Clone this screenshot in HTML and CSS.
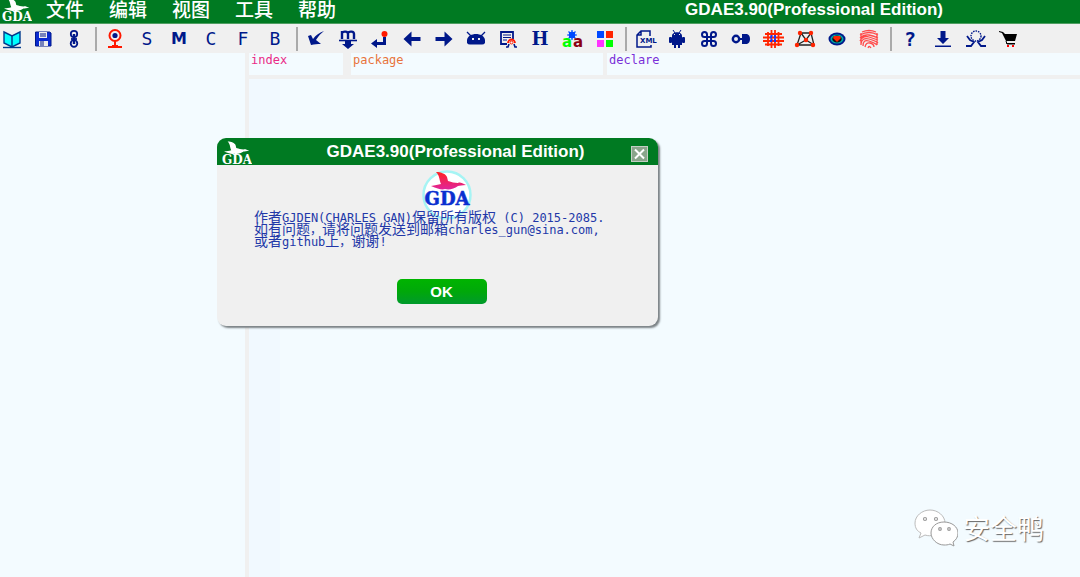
FILE: index.html
```html
<!DOCTYPE html>
<html lang="zh-CN">
<head>
<meta charset="utf-8">
<title>GDAE3.90(Professional Edition)</title>
<link rel="stylesheet" href="styles.css">
</head>
<body>
<svg class="defs" aria-hidden="true">
  <symbol id="bird" viewBox="0 0 36 18">
    <path d="M5 0c5 0 10 2 11 5l1 4c4 1 6 2 10 2 2-1 4 0 8 2-4 0-6 1-8 1-4 3-9 4-13 3-3 1-7 0-14-3 4-1 7-1 10-2-2-4-1-8-5-12z"/>
  </symbol>
</svg>
<header class="titlebar">
  <svg class="app-logo" viewBox="0 0 30 28" aria-label="GDA">
    <use href="#bird" x="2" y="3" width="26" height="14"/>
    <text x="15" y="26" text-anchor="middle">GDA</text>
  </svg>
  <nav class="menu">
    <button>文件</button><button>编辑</button><button>视图</button><button>工具</button><button>帮助</button>
  </nav>
  <h1 class="title">GDAE3.90(Professional Edition)</h1>
</header>

<div class="toolbar" role="toolbar" aria-label="Tools">
  <div class="group group-file">
    <button aria-label="Open"><svg viewBox="0 0 24 24"><path d="M4 5l8 4 8-4v11l-8 4-8-4z" fill="#0ff" stroke="#003a8c" stroke-width="1.4"/><path d="M12 9v10" stroke="#003a8c" stroke-width="1.4"/><path d="M3 20.500h18" stroke="#003a8c" stroke-width="1.400"/></svg></button>
    <button aria-label="Save"><svg viewBox="0 0 24 24"><path d="M4.500 5h14l1.500 1v13H4.500z" fill="#0b2bd0" stroke="#00188a"/><path d="M8 5h8v6H8zM8 14h9v5H8z" fill="#eee"/><path d="M9 7h6M9 9h6M10 14v5M12 14v5" stroke="#00188a"/></svg></button>
    <button aria-label="Link"><svg viewBox="0 0 24 24" fill="none" stroke="#00188a" stroke-width="1.800"><circle cx="12" cy="7" r="3.200"/><circle cx="12" cy="16.500" r="3.300"/><path d="M12 7v10" stroke-width="2.400"/><path d="M9 12h6"/></svg></button>
  </div>
  <span class="sep"></span>
  <div class="group">
    <button aria-label="Entry"><svg viewBox="0 0 24 24"><circle cx="12" cy="8.500" r="5.500" fill="#eee" stroke="#ff1800" stroke-width="2"/><circle cx="12" cy="8.500" r="2.600" fill="#00188a"/><path d="M12 14v5M5 20h14M9 19h6" stroke="#ff1800" stroke-width="2"/></svg></button>
    <button>S</button><button class="heavy">M</button><button>C</button><button>F</button><button>B</button>
  </div>
  <span class="sep"></span>
  <div class="group">
    <button aria-label="Check"><svg viewBox="0 0 24 24"><path d="M20 4c-5 4-6 6-8 9l5 4c-4 0-6 0-10 1L4 9l3-1 2 4c3-4 6-6 11-8z" fill="#00188a"/></svg></button>
    <button aria-label="Method"><svg viewBox="0 0 24 24" fill="none" stroke="#00188a"><path d="M6 12V4M6 6c1-2 6-2 6 1v5M12 6c1-2 6-2 6 1v5" stroke-width="2.400"/><path d="M3 13.500h18" stroke-width="1.600"/><path d="M9 14h6v3h3l-6 5-6-5h3z" fill="#00188a" stroke="none"/></svg></button>
    <button aria-label="Return"><svg viewBox="0 0 24 24"><path d="M18 10v8H9v3l-6-4.500L9 12v3h6v-5z" fill="#00188a"/><circle cx="16.500" cy="7" r="3" fill="#ff1800"/></svg></button>
    <button aria-label="Back"><svg viewBox="0 0 24 24"><path d="M3.500 12l8-7.500v5.500h9v4h-9v5.500z" fill="#00188a"/></svg></button>
    <button aria-label="Forward"><svg viewBox="0 0 24 24"><path d="M20.500 12l-8-7.500v5.500h-9v4h9v5.500z" fill="#00188a"/></svg></button>
    <button aria-label="App head"><svg viewBox="0 0 24 24"><path d="M3 16v-3c1-8 17-8 18 0v3q-1 1.500-3 1.500H6Q4 17.500 3 16z" fill="#00188a"/><path d="M3 5l4 4M21 5l-4 4" stroke="#00188a" stroke-width="1.300"/><path d="M8 11h2v2H8zM14 11h2v2h-2z" fill="#eee"/></svg></button>
    <button aria-label="Certificate"><svg viewBox="0 0 24 24" fill="none" stroke="#00188a"><path d="M11 17H5V5h12v7" stroke-width="1.800"/><path d="M7 8h8M7 10.500h8M7 13h4"/><path d="M12 16a3.500 3.500 0 1 1 7 0" stroke="#ff1800" stroke-width="1.800"/><circle cx="15.500" cy="15.500" r="1.500" stroke="#ff1800"/><path d="M13 17l-1 3h-2M18 17l1 3h2" stroke-width="1.600"/></svg></button>
    <button class="serif">H</button>
    <button class="replace" aria-label="Rename"><svg viewBox="0 0 24 24"><g stroke="#0048ff" fill="#0048ff"><circle cx="12" cy="8" r="3"/><path d="M12 3v10M7 8h10M8.500 4.500l7 7M15.500 4.500l-7 7" stroke-width="1.200"/></g><text x="2" y="20" fill="#0f0">a</text><text x="13" y="20" fill="#8a0010">a</text></svg></button>
    <button aria-label="Colours"><svg viewBox="0 0 24 24"><path d="M5 4h7v7H5z" fill="#0048ff"/><path d="M14 4h7v7h-7z" fill="#ff2400"/><path d="M5 13h7v7H5z" fill="#f3f"/><path d="M14 13h7v7h-7z" fill="#0f0"/></svg></button>
  </div>
  <span class="sep"></span>
  <div class="group">
    <button class="xml" aria-label="XML"><svg viewBox="0 0 24 24" fill="none" stroke="#00188a" stroke-width="1.500"><path d="M17 9V4H8L4 8v12h14v-2M4 8h4V4"/><text x="7" y="16" fill="#00188a" stroke="none">XML</text></svg></button>
    <button aria-label="Android"><svg viewBox="0 0 24 24" fill="#00188a"><path d="M7 9c0-5 10-5 10 0zM7 9h10v9h-2v3h-2v-3h-2v3H9v-3H7z"/><rect x="4" y="10" width="3" height="6" rx="1"/><rect x="17" y="10" width="3" height="6" rx="1"/><path d="M8 3l2 3M16 3l-2 3" stroke="#00188a"/><path d="M9 7h1v1H9zM14 7h1v1h-1z" fill="#eee"/></svg></button>
    <button aria-label="Command"><svg viewBox="0 0 24 24" fill="none" stroke="#00188a" stroke-width="2"><path d="M10 10H7.500A2.500 2.500 0 1 1 10 7.500v9A2.500 2.500 0 1 1 7.500 14h9a2.500 2.500 0 1 1-2.500 2.500v-9a2.500 2.500 0 1 1 2.500 2.500z"/></svg></button>
    <button aria-label="Connect"><svg viewBox="0 0 24 24"><circle cx="7" cy="12" r="3.200" fill="none" stroke="#00188a" stroke-width="2.400"/><path d="M10 12h5" stroke="#00188a" stroke-width="2"/><path d="M13 7h5q3 1 3 5t-3 5h-5v-4h2v-2h-2z" fill="#00188a"/></svg></button>
    <button aria-label="Network"><svg viewBox="0 0 24 24" fill="none" stroke="#ff2400" stroke-width="1.800"><path d="M7 5v14M10.500 3v18M14 3v18M17.500 5v14M4 7h17M2 10.500h21M2 14h21M4 17.500h17"/><path d="M9 10.500h7M9 14h7M10.500 8v8M14 8v8" stroke="#1038ff" stroke-dasharray="2 2"/></svg></button>
    <button aria-label="Graph"><svg viewBox="0 0 24 24"><path d="M8 6h10l3 12H4zM8 6l5 7 5-7M4 18l9-5 8 5" fill="none" stroke="#222" stroke-width="1.300"/><g fill="#ff2400"><circle cx="7" cy="6" r="2.200"/><circle cx="18" cy="6" r="2.200"/><circle cx="13" cy="13" r="2.200"/><circle cx="4" cy="18" r="2.200"/><circle cx="20" cy="18" r="2.200"/></g></svg></button>
    <button aria-label="View"><svg viewBox="0 0 24 24"><ellipse cx="12" cy="12" rx="8.500" ry="6.500" fill="#00188a"/><ellipse cx="12" cy="12" rx="6.500" ry="4.500" fill="#0aa"/><ellipse cx="12" cy="12" rx="4.800" ry="3.500" fill="#111"/><path d="M9 9h6l1 2-4 4-4-4z" fill="#ff2400"/></svg></button>
    <button aria-label="Fingerprint"><svg viewBox="0 0 24 24" fill="none" stroke="#ff4a4a" stroke-width="1.300"><path d="M5 5q7-3 14 0M3 8q9-5 18 0M3 11q4-4 9-3t9 3M3 14q3-6 9-4t9 3M4 17q1-7 8-5t9 4M6 19q0-7 6-5t8 4M8 20q1-5 5-4t4 4M11 21q1-3 3 0M4 6v12M20 6v12"/></svg></button>
  </div>
  <span class="sep"></span>
  <div class="group group-help">
    <button class="medium">?</button>
    <button aria-label="Download"><svg viewBox="0 0 24 24"><path d="M9.500 4h5v7H18l-6 6-6-6h3.500zM4 18.500h16v1.500H4z" fill="#00188a"/></svg></button>
    <button aria-label="About"><svg viewBox="0 0 24 24" fill="none" stroke="#00188a"><circle cx="12" cy="9" r="5" stroke-width="1.400" stroke-dasharray="1.500 1"/><path d="M3 9l3 4 4 2-3 4H2M21 9l-3 4-4 2 3 4h5" stroke-width="1.800"/></svg></button>
    <button aria-label="Shop"><svg viewBox="0 0 24 24"><path d="M2 4l4 1 2 2h12l-2 7H9L5 6 2 5zM10 16h8v1H9z" fill="#000"/><path d="M9 14l1 3h8" fill="none" stroke="#000"/><path d="M10 18h2v2h-2zM15 18h2v2h-2z" fill="#f00"/></svg></button>
  </div>
</div>

<main class="workspace">
  <aside class="tree"></aside>
  <section class="listing">
    <table class="columns">
      <tr><th class="c-index">index</th><th class="c-package">package</th><th class="c-declare">declare</th></tr>
    </table>
    <div class="code"><div class="gutter"></div></div>
  </section>
</main>

<section class="dialog" role="dialog" aria-labelledby="dialog-title">
  <header class="dialog-head">
    <svg class="app-logo" viewBox="0 0 30 28" aria-label="GDA">
      <use href="#bird" x="2" y="3" width="26" height="14"/>
      <text x="15" y="26" text-anchor="middle">GDA</text>
    </svg>
    <h2 class="title" id="dialog-title">GDAE3.90(Professional Edition)</h2>
    <button class="close" aria-label="Close"><svg viewBox="0 0 15 14"><path d="M3 2.500l9 9M12 2.500l-9 9" stroke="#fff" stroke-width="2"/></svg></button>
  </header>
  <div class="dialog-body">
    <svg class="badge" viewBox="0 0 50 50" aria-label="GDA">
      <defs><linearGradient id="wing" x2="0" y2="1"><stop stop-color="#ff2222"/><stop offset="1" stop-color="#e0249c"/></linearGradient></defs>
      <circle cx="25" cy="25" r="23.500" fill="#fff" stroke="#a6f4f4" stroke-width="2.500"/>
      <use href="#bird" x="9" y="2" width="36" height="18" fill="url(#wing)"/>
      <text x="25" y="35" text-anchor="middle">GDA</text>
    </svg>
    <p class="message"><span>作者</span>GJDEN(CHARLES GAN)<span>保留所有版权</span> (C) 2015-2085.<br><span>如有问题</span>，<span>请将问题发送到邮箱</span>charles_gun@sina.com,<br><span>或者</span>github<span>上</span>，<span>谢谢</span>!</p>
    <button class="ok">OK</button>
  </div>
</section>

<div class="watermark">
  <svg viewBox="0 0 44 38" aria-hidden="true">
    <g fill="#fff" stroke="#999" stroke-width="1">
      <path d="M16 1C8 1 1 7 1 14c0 5 2 8 6 10l-2 5 6-3c3 1 6 1 8 0 7-1 12-6 12-12C31 7 24 1 16 1z" stroke="#bbb"/>
      <path d="M30 13c-8 0-13 5-13 11s6 12 13 12c2 0 4 0 6-1l4 2-1-4c3-2 5-5 5-9 0-6-6-11-14-11z"/>
    </g>
    <g fill="#fff" stroke="#999" stroke-width="1.200"><circle cx="11" cy="10" r="1.500"/><circle cx="22" cy="10" r="1.500"/><circle cx="26" cy="20" r="1.300"/><circle cx="35" cy="20" r="1.300"/></g>
  </svg>
  <span>安全鸭</span>
</div>
</body>
</html>
```

FILE: styles.css
```css
* { box-sizing: border-box; }
body {
  margin: 0;
  min-height: 100vh;
  display: flex;
  flex-direction: column;
  position: relative;
  overflow: hidden;
  background: #f0f0f0;
  font-family: "Liberation Sans", "Noto Sans CJK SC", sans-serif;
}
button {
  border: 0;
  padding: 0;
  margin: 0;
  background: none;
  font: inherit;
  color: inherit;
}
.defs { position: absolute; width: 0; height: 0; }

.titlebar {
  height: 24px;
  display: flex;
  align-items: flex-end;
  background: #007a22;
  border-bottom: 1px solid #4f9e62;
  color: #fff;
}
.app-logo { width: 30px; height: 28px; fill: #fff; flex: none; }
.app-logo text { font: bold 12px "DejaVu Serif", serif; }
.titlebar .app-logo { margin-left: 2px; }
.menu {
  display: flex;
  gap: 25px;
  margin-left: 14px;
  align-self: flex-start;
}
.menu button { font-size: 19px; line-height: 18px; font-weight: 500; font-family: "Noto Sans CJK SC", sans-serif; }
.title { margin: 0; font-size: 17px; line-height: 20px; font-weight: bold; white-space: nowrap; }
.titlebar .title { margin-left: auto; margin-right: 137px; align-self: flex-start; }

.toolbar {
  height: 29px;
  display: flex;
  align-items: center;
  background: #f0f0f0;
  color: #00188a;
}
.group { display: flex; gap: 8px; }
.group-file { gap: 7px; }
.group-help { gap: 9px; }
.group button {
  width: 24px;
  height: 24px;
  line-height: 24px;
  font-family: "DejaVu Sans Mono", monospace;
  font-size: 18px;
  display: flex;
  justify-content: center;
}
.group svg { width: 24px; height: 24px; }
.group .medium { font-weight: bold; font-size: 20px; }
.group .heavy { font: bold 16px/24px "DejaVu Sans", sans-serif; }
.group .serif { font: bold 18px/24px "DejaVu Serif", serif; }
.replace text { font: bold 15px "DejaVu Sans", sans-serif; }
.xml text { font: bold 7px "DejaVu Sans", sans-serif; }
.sep { width: 2px; height: 24px; margin: 0 6px 0 9px; background: #aaa; }

.workspace { flex: 1; display: flex; gap: 4px; }
.tree { flex: 0 0 245px; background: #f3fbff; }
.listing { flex: 1; display: flex; flex-direction: column; gap: 4px; }
.columns { width: 100%; table-layout: fixed; border-collapse: collapse; }
.columns th {
  height: 22px;
  padding: 0 2px;
  vertical-align: top;
  text-align: left;
  background: #f3fbff;
  background-clip: padding-box;
  font: 12px/15px "DejaVu Sans Mono", monospace;
}
.columns .c-index { width: 98px; border-right: 8px solid #f0f0f0; color: #ea2a86; }
.columns .c-package { width: 258px; border-right: 4px solid #f0f0f0; color: #e8743c; }
.columns .c-declare { color: #7a2fd8; }
.code { flex: 1; display: flex; background: #f3fbff; }
.gutter { width: 31px; background: #f1f9ff; }

.dialog {
  position: absolute;
  left: 217px;
  top: 138px;
  width: 441px;
  border-radius: 9px;
  overflow: hidden;
  background: #f0f0f0;
  box-shadow: 2px 2px 2px #7b8286;
}
.dialog-head {
  height: 27px;
  display: flex;
  align-items: center;
  justify-content: space-between;
  padding: 0 10px 0 5px;
  background: #007a22;
  color: #fff;
}
.dialog-head .title { margin-left: 28px; line-height: 27px; }
.close {
  width: 17px;
  height: 16px;
  margin-top: 4px;
  background: #8aa58b;
  border: 1px solid #c3cfc3;
  display: flex;
}
.dialog-body {
  display: flex;
  flex-direction: column;
  align-items: center;
  padding: 5px 0 22px;
}
.badge { width: 50px; height: 50px; margin-left: 18px; }
.badge text { font: bold 18px "DejaVu Serif", serif; fill: #0a2fd0; stroke: #0a2fd0; stroke-width: 0.5; }
.message {
  align-self: stretch;
  position: relative;
  margin: -8px 0 31px;
  padding-left: 37px;
  font: 12px/12px "DejaVu Sans Mono", "Noto Sans CJK SC", monospace;
  color: #2238a8;
  white-space: nowrap;
}
.message span { font-size: 14px; line-height: 0; font-family: "Noto Sans CJK SC", sans-serif; }
.ok {
  width: 90px;
  height: 25px;
  margin-left: 8px;
  border-radius: 5px;
  background: linear-gradient(#00b400, #00a80a 50%, #009a2c);
  color: #fff;
  font-weight: bold;
  font-size: 15px;
}

.watermark {
  position: absolute;
  right: 36px;
  bottom: 30px;
  display: flex;
  align-items: center;
  gap: 5px;
  color: #fff;
  font: 27px/38px "Noto Sans CJK SC", sans-serif;
  text-shadow: 1px 1px 1px #666;
}
.watermark svg { width: 44px; height: 38px; }
```
